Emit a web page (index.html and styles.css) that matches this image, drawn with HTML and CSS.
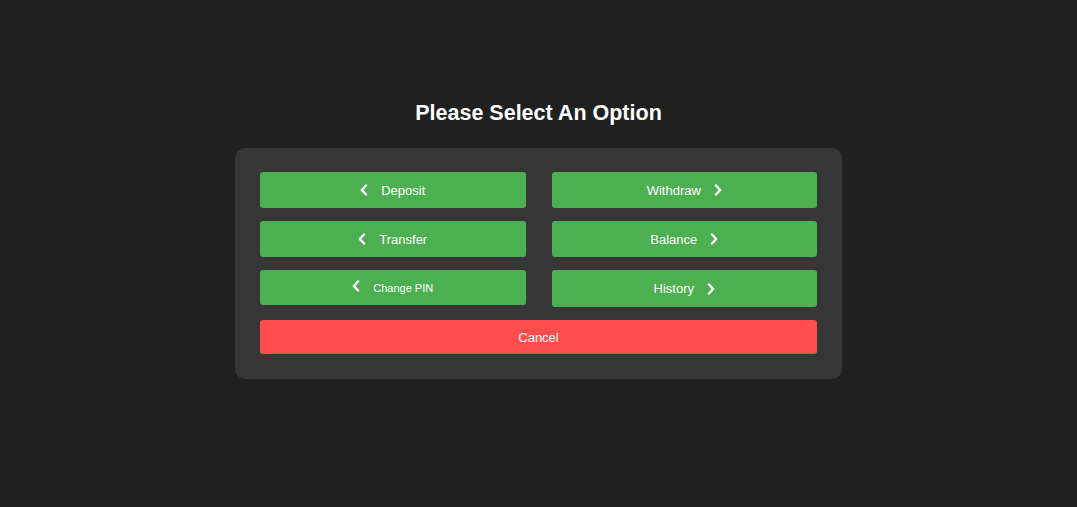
FILE: index.html
```html
<!doctype html>
<html>
<head>
<meta charset="utf-8">
<title>ATM Menu</title>
<link rel="stylesheet" href="styles.css">
</head>
<body>
<div class="page">
	<h1 class="title">Please Select An Option</h1>
	<div class="panel">
		<button class="btn">
			<svg class="chev" viewBox="0 0 8 12"><polyline points="6,1.5 1.8,6 6,10.5"/></svg>
			<span>Deposit</span>
		</button>
		<button class="btn">
			<span>Withdraw</span>
			<svg class="chev" viewBox="0 0 8 12"><polyline points="2,1.5 6.2,6 2,10.5"/></svg>
		</button>
		<button class="btn">
			<svg class="chev" viewBox="0 0 8 12"><polyline points="6,1.5 1.8,6 6,10.5"/></svg>
			<span>Transfer</span>
		</button>
		<button class="btn">
			<span>Balance</span>
			<svg class="chev" viewBox="0 0 8 12"><polyline points="2,1.5 6.2,6 2,10.5"/></svg>
		</button>
		<button class="btn btn-small">
			<svg class="chev" viewBox="0 0 8 12"><polyline points="6,1.5 1.8,6 6,10.5"/></svg>
			<span>Change PIN</span>
		</button>
		<button class="btn btn-tall">
			<span>History</span>
			<svg class="chev" viewBox="0 0 8 12"><polyline points="2,1.5 6.2,6 2,10.5"/></svg>
		</button>
		<button class="btn btn-cancel">Cancel</button>
	</div>
</div>
</body>
</html>
```

FILE: styles.css
```css
*{margin:0; padding:0; box-sizing:border-box;}
body{
	background: #202020;
	font-family: "Liberation Sans", Arial, sans-serif;
	color: #fff;
}
.page{
	display: flex;
	flex-direction: column;
	align-items: center;
	padding-top: 101px;
}
.title{
	font-size: 21.5px;
	line-height: 24px;
	font-weight: bold;
	margin-bottom: 23px;
}
.panel{
	width: 607px;
	background: #363636;
	border-radius: 10px;
	padding: 24px 25px 25px;
	display: grid;
	grid-template-columns: 1fr 1fr;
	column-gap: 26px;
	row-gap: 13px;
	align-items: start;
}
.btn{
	display: flex;
	align-items: center;
	justify-content: center;
	gap: 13px;
	height: 36px;
	border: none;
	border-radius: 3px;
	background: #4caf50;
	color: #fff;
	font-family: "Liberation Sans", Arial, sans-serif;
	font-size: 13px;
}
.btn-small{
	height: 35px;
	font-size: 11px;
	gap: 13px;
}
.btn-small .chev{
	margin-top: -4px;
}
.btn-tall{
	height: 37px;
}
.btn-cancel{
	grid-column: 1 / 3;
	height: 34px;
	background: #ff4c4c;
}
.chev{
	width: 8px;
	height: 12px;
	fill: none;
	stroke: #fff;
	stroke-width: 2.4;
	stroke-linecap: round;
	stroke-linejoin: round;
}
```
